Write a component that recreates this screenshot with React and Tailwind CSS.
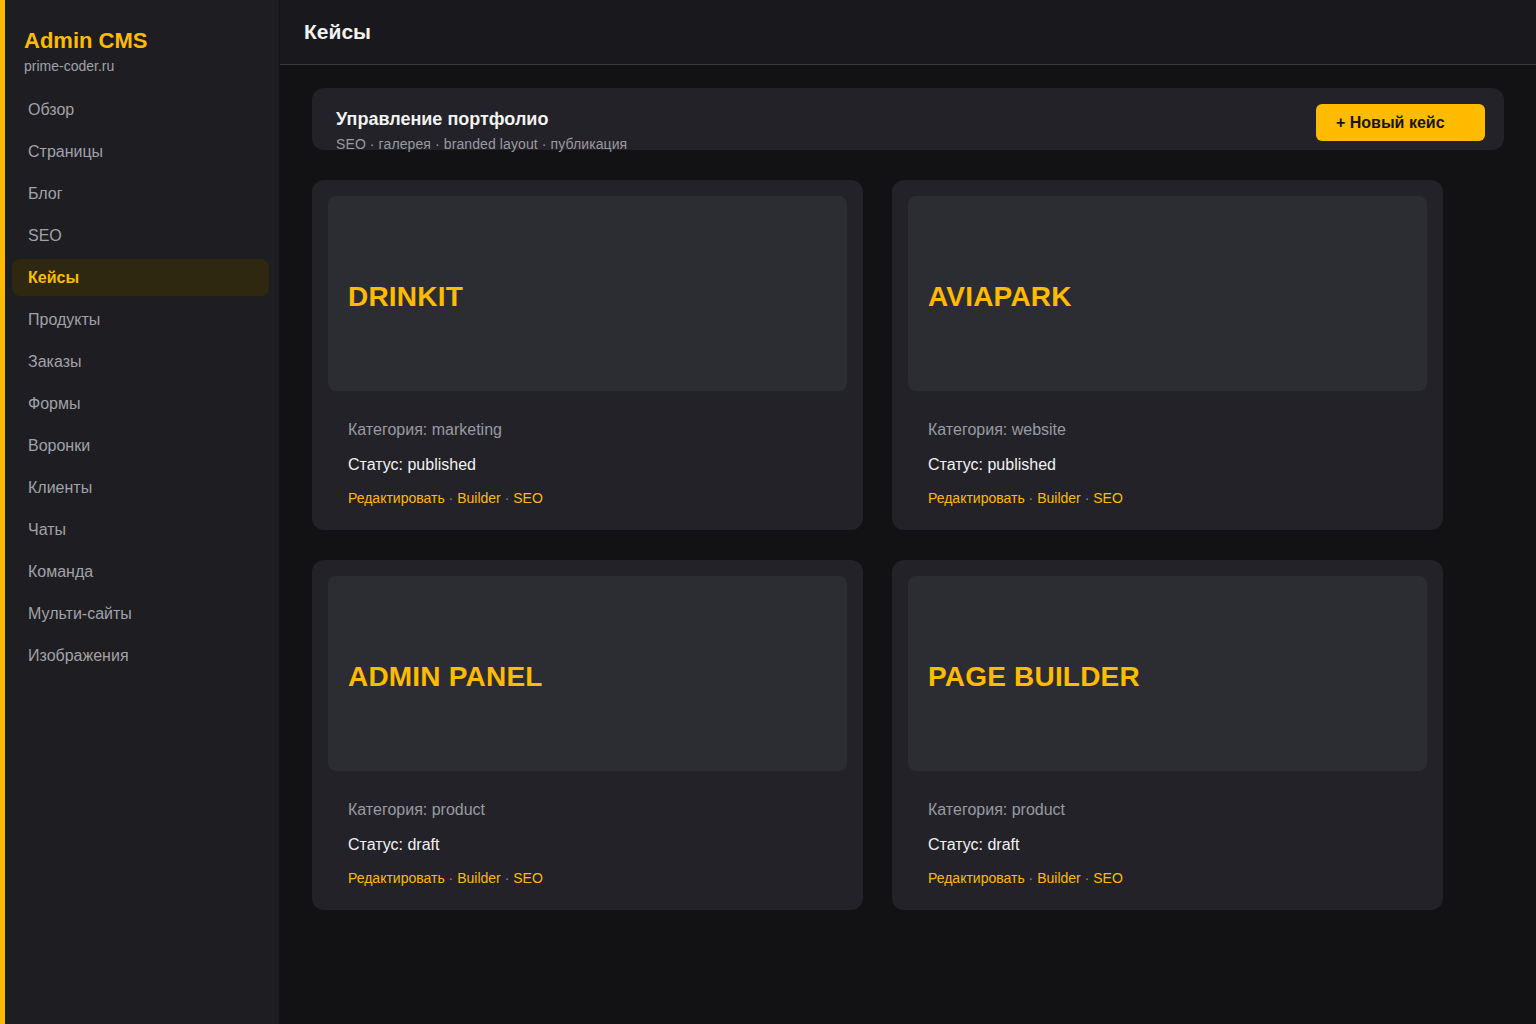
import React from 'react';

const navItems = [
  'Обзор',
  'Страницы',
  'Блог',
  'SEO',
  'Кейсы',
  'Продукты',
  'Заказы',
  'Формы',
  'Воронки',
  'Клиенты',
  'Чаты',
  'Команда',
  'Мульти-сайты',
  'Изображения',
];

const cases = [
  { title: 'DRINKIT', category: 'marketing', status: 'published' },
  { title: 'AVIAPARK', category: 'website', status: 'published' },
  { title: 'ADMIN PANEL', category: 'product', status: 'draft' },
  { title: 'PAGE BUILDER', category: 'product', status: 'draft' },
];

const Sidebar = () => (
  <aside className="w-[280px] shrink-0 min-h-screen bg-[#1d1d22] border-l-[5px] border-l-[#ffbb00] border-r border-r-[#141417]">
    <div className="pl-[19px] pt-[27px]">
      <div className="text-[22px] leading-[28px] font-bold text-[#ffbb00]">Admin CMS</div>
      <div className="text-[14px] leading-[18px] text-[#a2a2a8] mt-[2px]">prime-coder.ru</div>
    </div>
    <nav className="pl-[7px] pr-[10px] mt-[16px] flex flex-col gap-[5px]">
      {navItems.map((item) => {
        const active = item === 'Кейсы';
        return (
          <div
            key={item}
            className={
              active
                ? 'h-[37px] flex items-center px-4 rounded-lg bg-[#2e2810] text-[#ffbb00] font-bold text-[16px]'
                : 'h-[37px] flex items-center px-4 rounded-lg text-[#a2a2a8] text-[16px]'
            }
          >
            {item}
          </div>
        );
      })}
    </nav>
  </aside>
);

const CaseCard = ({ title, category, status }) => (
  <div className="h-[350px] rounded-xl bg-[#222228] p-4">
    <div className="h-[195px] rounded-lg bg-[#2c2d33] flex items-center pl-5 pt-[7px]">
      <span className="text-[28px] font-bold text-[#ffbb00] tracking-[0.2px]">{title}</span>
    </div>
    <div className="px-5 mt-[27px]">
      <div className="text-[16px] leading-[24px] text-[#9a9aa0]">Категория: {category}</div>
      <div className="text-[16px] leading-[24px] text-[#f2f2f2] mt-[11px]">Статус: {status}</div>
      <div className="text-[14px] leading-[20px] text-[#ffbb00] mt-[11px]">
        Редактировать <span className="text-[#8a8a90]">·</span> Builder{' '}
        <span className="text-[#8a8a90]">·</span> SEO
      </div>
    </div>
  </div>
);

export default function App() {
  return (
    <div
      className="flex min-h-screen bg-[#121214]"
      style={{ fontFamily: '"Liberation Sans", Arial, sans-serif' }}
    >
      <Sidebar />
      <main className="flex-1 min-w-0">
        <header className="h-[65px] border-b border-b-[#3a3a40] bg-[#19191d] flex items-center px-6">
          <h1 className="text-[21px] font-bold text-[#f2f2f2]">Кейсы</h1>
        </header>
        <div className="px-8 pt-[23px]">
          <div className="h-[62px] rounded-xl bg-[#222228] flex justify-between">
            <div className="pl-6 pt-[20px]">
              <div className="text-[18px] leading-[22px] font-bold text-[#f2f2f2]">Управление портфолио</div>
              <div className="text-[14px] leading-[18px] text-[#9a9aa0] mt-[5px] tracking-[0.1px]">
                SEO · галерея · branded layout · публикация
              </div>
            </div>
            <button className="w-[169px] h-[37px] mt-4 mr-[19px] rounded-md bg-[#ffbb00] text-[#151515] font-bold text-[16px] text-left pl-5">
              + Новый кейс
            </button>
          </div>
          <div className="grid grid-cols-[551px_551px] gap-x-[29px] gap-y-[30px] mt-[30px]">
            {cases.map((c) => (
              <CaseCard key={c.title} {...c} />
            ))}
          </div>
        </div>
      </main>
    </div>
  );
}
